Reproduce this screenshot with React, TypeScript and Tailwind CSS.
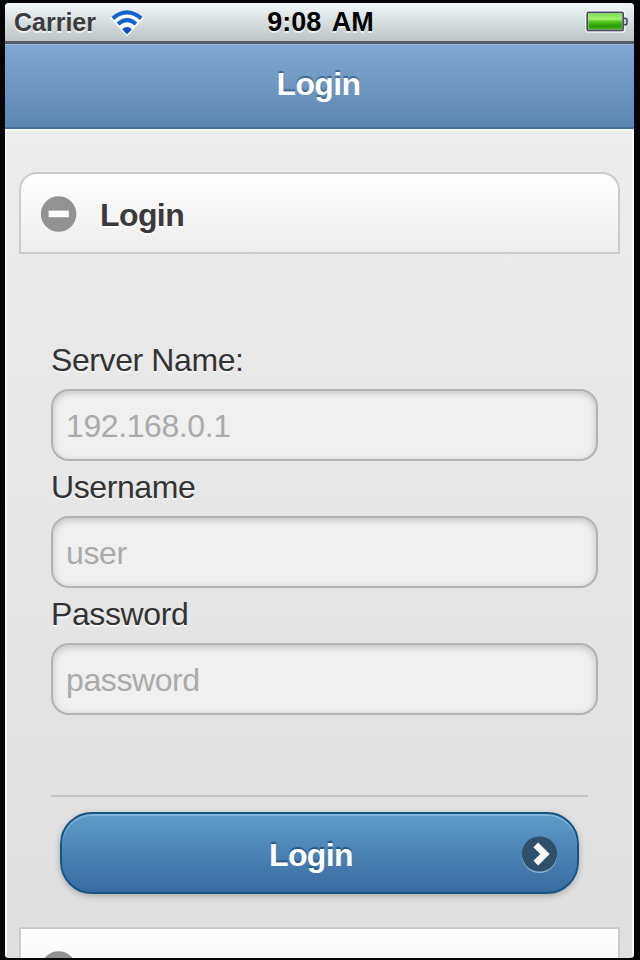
import React, { useState } from "react";

const fields = [
  { id: "server", label: "Server Name:", placeholder: "192.168.0.1", type: "text" },
  { id: "username", label: "Username", placeholder: "user", type: "text" },
  { id: "password", label: "Password", placeholder: "password", type: "password" },
];

const WifiIcon = () => (
  <svg width="34" height="28" viewBox="0 0 34 28" fill="none">
    <path d="M17 27.5 L0 9 Q17 -5.5 34 9 Z" fill="#fff" fillOpacity="0.85" />
    <path d="M2.8 9.4 Q17 -2.6 31.2 9.4" stroke="#1263cf" strokeWidth="4" />
    <path d="M8 15 Q17 7.2 26 15" stroke="#1263cf" strokeWidth="4" />
    <path d="M17 25.4 L12.2 20.2 Q17 16 21.8 20.2 Z" fill="#0b4fc4" />
  </svg>
);

const BatteryIcon = () => (
  <svg width="44" height="24" viewBox="0 0 44 24" fill="none">
    <defs>
      <linearGradient id="charge" x1="0" y1="0" x2="0" y2="1">
        <stop offset="0" stopColor="#7ce04a" />
        <stop offset="0.35" stopColor="#a5f070" />
        <stop offset="0.5" stopColor="#55c81f" />
        <stop offset="0.8" stopColor="#2a9a05" />
        <stop offset="1" stopColor="#49b51c" />
      </linearGradient>
    </defs>
    <rect x="0.8" y="1" width="39" height="21" rx="2" stroke="#fff" strokeOpacity="0.7" strokeWidth="1.6" />
    <rect x="2.2" y="2.4" width="36" height="18" rx="1.5" fill="#c9e8c0" stroke="#4a4a68" strokeWidth="1.7" />
    <rect x="3.4" y="3.6" width="33.6" height="15.8" fill="url(#charge)" />
    <path d="M39 8.2h1.2q1.8 0 1.8 1.8v3q0 1.8-1.8 1.8H39" fill="#c5cbd6" stroke="#4a4a68" strokeWidth="1.6" />
  </svg>
);

const MinusIcon = () => (
  <svg width="36" height="36" viewBox="0 0 36 36">
    <circle cx="17.6" cy="18" r="17.8" fill="#929292" />
    <rect x="7.6" y="14.6" width="20.2" height="6.6" fill="#fff" />
  </svg>
);

const ArrowIcon = () => (
  <svg width="38" height="39" viewBox="0 0 38 39" fill="none">
    <circle cx="18.5" cy="20.5" r="17.6" fill="#8bb4d6" />
    <circle cx="18.5" cy="19" r="17.6" fill="#2f506c" />
    <path d="M14.8 9.8 L24 19 L14.8 28.2" stroke="#fff" strokeWidth="6.6" />
  </svg>
);

const App = () => {
  const [values, setValues] = useState<any>({});

  return (
    <div className="w-[640px] h-[960px] overflow-hidden bg-[#050507] pt-[3px] pl-[5px] font-['Liberation_Sans',Arial,sans-serif]">
      <div className="w-[629px] h-[955px] flex flex-col overflow-hidden rounded-[4px] bg-linear-to-b from-[#eeeeee] to-[#dfdfdf]">
        {/* Status bar */}
        <div className="h-[41px] shrink-0 grid grid-cols-[1fr_auto_1fr] items-start border-b-[3px] border-[#555d64] bg-linear-to-b from-[#f2f8fa] to-[#bcc4c6] pl-[9px] pr-[5px] [text-shadow:0_2px_0_rgba(255,255,255,0.7)]">
          <div className="flex items-start">
            <span className="mt-[5px] text-[25px] leading-7 font-bold text-[#3c3c3c]">Carrier</span>
            <span className="ml-[14px] mt-[6px]">
              <WifiIcon />
            </span>
          </div>
          <span className="mt-[5px] mr-[2px] text-[27px] leading-7 font-bold text-black [word-spacing:4px]">9:08 AM</span>
          <div className="flex justify-end mt-[7px]">
            <BatteryIcon />
          </div>
        </div>

        {/* Header */}
        <div className="h-[85px] shrink-0 flex items-center justify-center border-b-2 border-[#456f9b] bg-linear-to-b from-[#81a8d2] to-[#5b87b0] shadow-[inset_0_1px_0_#9abadc]">
          <h1 className="-mt-1 pr-[2px] text-[32px] leading-10 font-bold tracking-[-0.6px] text-white [text-shadow:0_-2px_1px_#3e6790]">Login</h1>
        </div>

        {/* Content */}
        <div className="flex-1 border-x-2 border-t-2 border-[#f8f8f8] pt-[41px] px-3">
          <div className="h-[82px] flex items-center rounded-t-[18px] border-2 border-[#cbcbcb] bg-linear-to-b from-white to-[#ededed] pt-[2px] pl-[20px]">
            <MinusIcon />
            <h2 className="ml-[23px] pt-[2px] text-[32px] leading-10 font-bold tracking-[-0.6px] text-[#3a3a3a] [text-shadow:0_2px_0_#fff]">Login</h2>
          </div>

          <div className="pt-[86px] pl-[32px] pr-[22px]">
            {fields.map((field) => (
              <div key={field.id} className="h-[127px]">
                <label
                  htmlFor={field.id}
                  className="block h-[49px] text-[32px] leading-10 tracking-[-0.4px] text-[#333333] [text-shadow:0_2px_0_#f6f6f6]"
                >
                  {field.label}
                </label>
                <input
                  id={field.id}
                  type={field.type}
                  placeholder={field.placeholder}
                  value={values[field.id] || ""}
                  onChange={(e) => setValues({ ...values, [field.id]: e.target.value })}
                  className="block h-[72px] w-full rounded-[18px] border-2 border-[#b2b2b2] bg-[#f0f0f0] pl-[13px] pt-[2px] text-[32px] tracking-[-0.4px] text-[#333333] placeholder:text-[#aaaaaa] shadow-[inset_0_2px_7px_rgba(0,0,0,0.2)] outline-none"
                />
              </div>
            ))}
          </div>

          <div className="mt-[74px] ml-[32px] mr-[32px] border-t-2 border-[#c4c4c4]" />

          <button className="mt-[15px] ml-[41px] flex h-[82px] w-[519px] items-center rounded-[32px] border-2 border-[#155580] bg-linear-to-b from-[#5f9cc9] to-[#396ba2] pt-[2px] pr-[18px] shadow-[inset_0_2px_0_#83b2d8,0_2px_6px_rgba(0,0,0,0.25)]">
            <span className="flex-1 pl-[39px] pt-[2px] text-center text-[32px] leading-10 font-bold tracking-[-0.6px] text-white [text-shadow:0_-2px_1px_#245885]">Login</span>
            <ArrowIcon />
          </button>

          {/* Next section, cut off by the screen */}
          <div className="mt-[33px] h-[82px] flex items-center border-2 border-[#cbcbcb] bg-linear-to-b from-white to-[#ededed] pt-[2px] pl-[20px]">
            <MinusIcon />
          </div>
        </div>
      </div>
    </div>
  );
};

export default App;
